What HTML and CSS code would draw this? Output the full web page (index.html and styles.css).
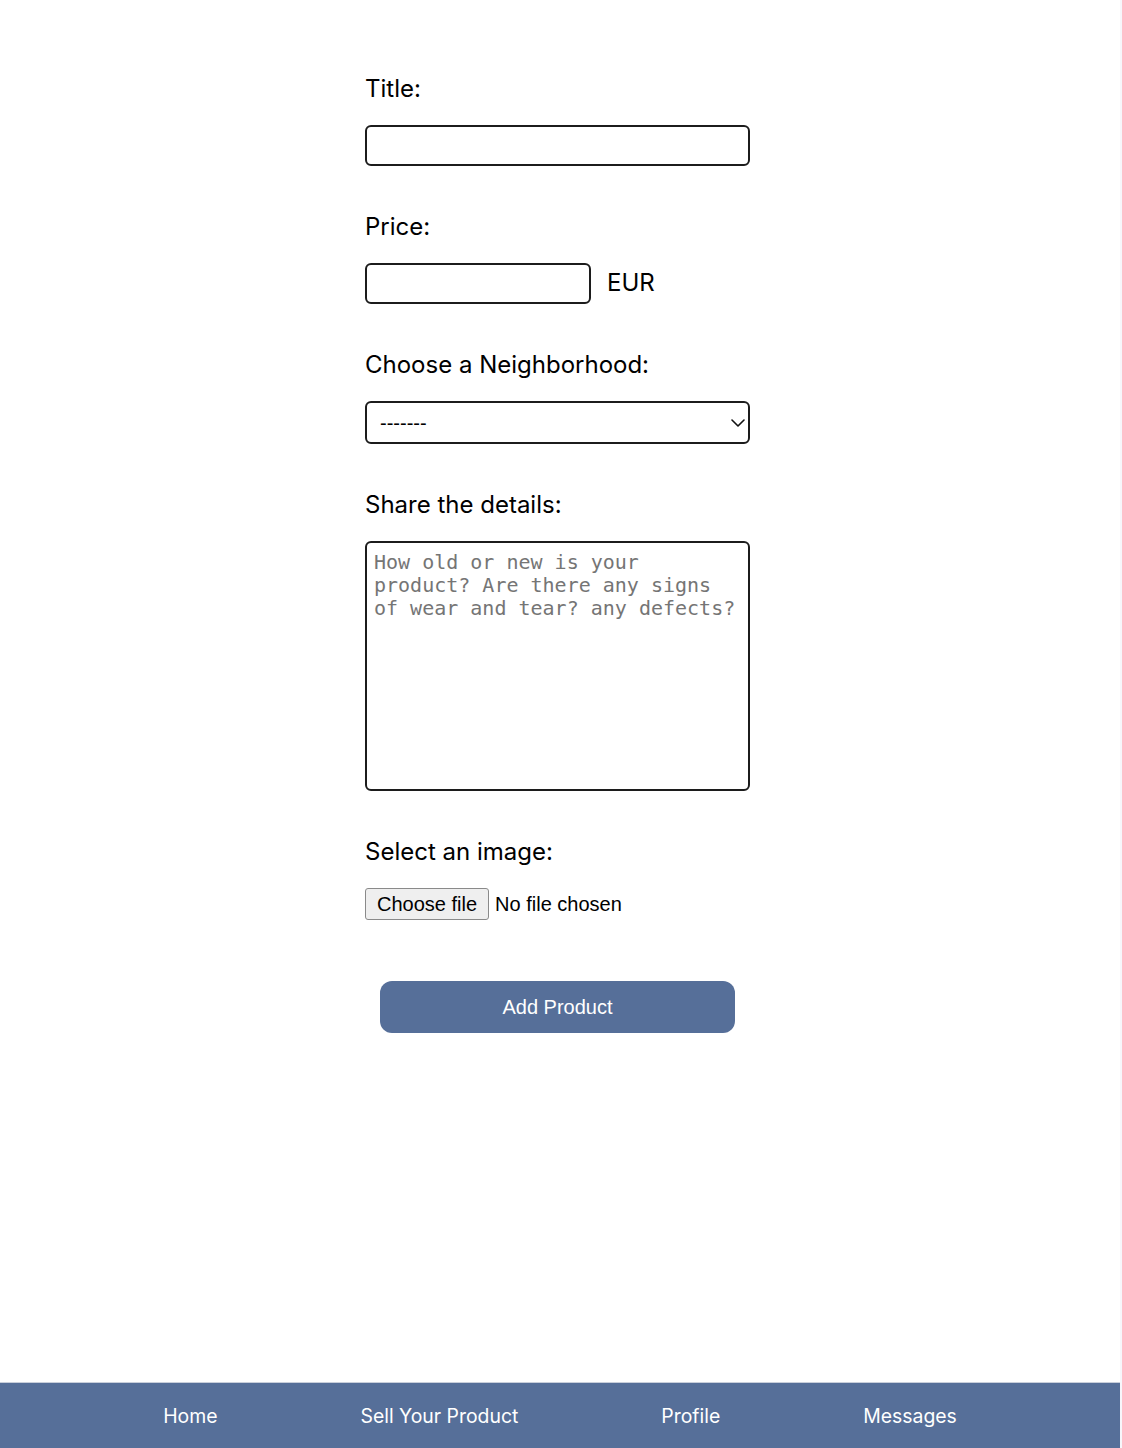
FILE: index.html
```html
<!DOCTYPE html>
<html lang="en">
<head>
<meta charset="utf-8">
<title>Sell Your Product</title>
<link rel="stylesheet" href="styles.css">
</head>
<body>
<div class="page">
  <main class="main">
    <form class="form">
      <div class="field">
        <label class="label" for="title">Title:</label>
        <input class="input" id="title" type="text">
      </div>
      <div class="field">
        <label class="label" for="price">Price:</label>
        <div class="price-row">
          <input class="input input-price" id="price" type="text">
          <span class="currency">EUR</span>
        </div>
      </div>
      <div class="field">
        <label class="label" for="hood">Choose a Neighborhood:</label>
        <div class="select-wrap">
          <select class="select" id="hood">
            <option>-------</option>
          </select>
          <svg class="chevron" width="14" height="8" viewBox="0 0 14 8"><path d="M1 1 L7 7 L13 1" fill="none" stroke="#111" stroke-width="1.6" stroke-linecap="round" stroke-linejoin="round"/></svg>
        </div>
      </div>
      <div class="field">
        <label class="label" for="details">Share the details:</label>
        <textarea class="textarea" id="details" placeholder="How old or new is your product? Are there any signs of wear and tear? any defects?"></textarea>
      </div>
      <div class="field field-file">
        <label class="label">Select an image:</label>
        <label class="file">
          <span class="file-btn">Choose file</span>
          <span class="file-name">No file chosen</span>
          <input class="file-input" type="file">
        </label>
      </div>
      <button class="submit" type="button">Add Product</button>
    </form>
  </main>
  <nav class="nav">
    <a class="nav-link" href="#">Home</a>
    <a class="nav-link" href="#">Sell Your Product</a>
    <a class="nav-link" href="#">Profile</a>
    <a class="nav-link" href="#">Messages</a>
  </nav>
</div>
</body>
</html>
```

FILE: styles.css
```css
html {
  background: #f7f7fb;
}
body {
  margin: 0;
  width: 1120px;
  background: #ffffff;
  font-family: Inter, "Noto Sans", sans-serif;
  color: #000;
}
.page {
  min-height: 1448px;
  display: flex;
  flex-direction: column;
}
.main {
  flex: 1;
  padding: 73.5px 5px 0 0;
}
.form {
  width: 385px;
  margin: 0 auto;
  display: flex;
  flex-direction: column;
}
.field {
  display: flex;
  flex-direction: column;
  margin-bottom: 45.5px;
}
.field-file {
  margin-bottom: 61px;
}
.label {
  display: block;
  font-size: 24px;
  line-height: 29px;
  margin-bottom: 22.5px;
}
.input {
  box-sizing: border-box;
  height: 41px;
  width: 385px;
  border: 2px solid #1c1c1c;
  border-radius: 6px;
  background: #fff;
  font-size: 20px;
  padding: 0 10px;
  margin: 0;
}
.price-row {
  display: flex;
  align-items: center;
  gap: 16px;
}
.input-price {
  width: 226px;
}
.currency {
  font-size: 24px;
  margin-top: -2px;
}
.select-wrap {
  position: relative;
  height: 43px;
}
.select {
  appearance: none;
  -webkit-appearance: none;
  box-sizing: border-box;
  width: 385px;
  height: 43px;
  border: 2px solid #1c1c1c;
  border-radius: 6px;
  background: #fff;
  font-family: "Liberation Sans", Arial, sans-serif;
  font-size: 20px;
  color: #000;
  padding: 0 0 0 13px;
  margin: 0;
}
.chevron {
  position: absolute;
  right: 5px;
  top: 18px;
  pointer-events: none;
}
.textarea {
  box-sizing: border-box;
  width: 385px;
  height: 250px;
  border: 2px solid #1c1c1c;
  border-radius: 6px;
  font-family: "DejaVu Sans Mono", monospace;
  font-size: 20px;
  line-height: 23px;
  padding: 8px 7px;
  margin: 0;
  resize: none;
}
.textarea::placeholder {
  color: #757575;
}
.file {
  display: flex;
  align-items: center;
  font-family: "Liberation Sans", Arial, sans-serif;
  font-size: 20px;
  height: 32px;
}
.file-btn {
  box-sizing: border-box;
  height: 32px;
  display: flex;
  align-items: center;
  padding: 0 11px;
  background: #efefef;
  border: 1px solid #8a8a8a;
  border-radius: 3px;
  margin-right: 6px;
}
.file-input {
  display: none;
}
.submit {
  margin: 0 15px;
  height: 52px;
  border: none;
  border-radius: 12px;
  background: #566f99;
  color: #fff;
  font-family: "Liberation Sans", Arial, sans-serif;
  font-size: 20px;
  padding-top: 2px;
}
.nav {
  height: 66px;
  box-sizing: border-box;
  border-top: 1px solid #c9cfdb;
  background: #566f99;
  display: flex;
  justify-content: center;
  align-items: center;
  gap: 143px;
}
.nav-link {
  color: #fff;
  text-decoration: none;
  font-size: 19.4px;
}
```
